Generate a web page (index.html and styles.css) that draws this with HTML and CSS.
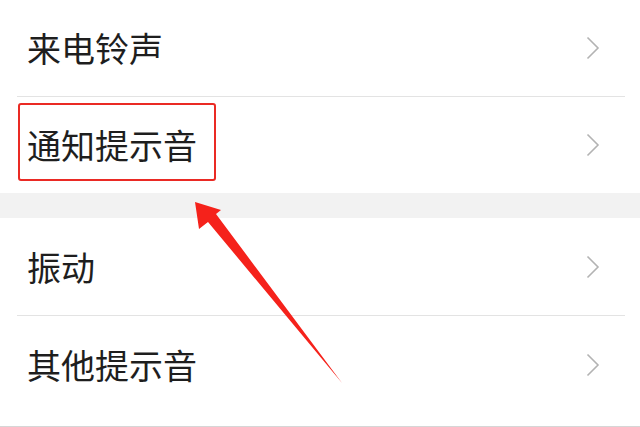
FILE: index.html
```html
<!DOCTYPE html>
<html lang="zh-CN">
<head>
<meta charset="utf-8">
<title>声音设置</title>
<link rel="stylesheet" href="styles.css">
</head>
<body>
<div class="page">
  <div class="group">
    <div class="item item-first">
      <span class="label">来电铃声</span>
      <svg class="chev" width="14" height="24" viewBox="0 0 14 24"><polyline points="1.5,1.5 12,12 1.5,22.5" fill="none" stroke="#b3b3b3" stroke-width="1.6"/></svg>
    </div>
    <div class="item item-second">
      <span class="label">通知提示音</span>
      <svg class="chev" width="14" height="24" viewBox="0 0 14 24"><polyline points="1.5,1.5 12,12 1.5,22.5" fill="none" stroke="#b3b3b3" stroke-width="1.6"/></svg>
      <div class="highlight"></div>
    </div>
  </div>
  <div class="gap"></div>
  <div class="group">
    <div class="item item-third">
      <span class="label">振动</span>
      <svg class="chev" width="14" height="24" viewBox="0 0 14 24"><polyline points="1.5,1.5 12,12 1.5,22.5" fill="none" stroke="#b3b3b3" stroke-width="1.6"/></svg>
    </div>
    <div class="item item-fourth">
      <span class="label">其他提示音</span>
      <svg class="chev" width="14" height="24" viewBox="0 0 14 24"><polyline points="1.5,1.5 12,12 1.5,22.5" fill="none" stroke="#b3b3b3" stroke-width="1.6"/></svg>
    </div>
  </div>
  <div class="footer"></div>
  <svg class="arrow" width="640" height="427" viewBox="0 0 640 427">
    <polygon points="195,202 221,210 216,214 342,383 208,222 199,229" fill="#f5221b"/>
  </svg>
</div>
</body>
</html>
```
FILE: styles.css
```css
html, body {
  margin: 0;
  padding: 0;
  background: #ffffff;
}
.page {
  position: relative;
  width: 640px;
  height: 427px;
  overflow: hidden;
  font-family: "Noto Sans CJK SC", "Noto Sans", sans-serif;
  color: #1e1e1e;
}
.group {
  display: flex;
  flex-direction: column;
}
.item {
  position: relative;
  display: flex;
  align-items: center;
  justify-content: space-between;
  padding: 0 40px 0 27px;
  box-sizing: border-box;
}
.label {
  font-size: 34px;
  line-height: 40px;
  letter-spacing: 0;
}
.chev {
  display: block;
  flex: none;
}
.item-first {
  height: 97px;
  border-bottom: 1px solid #e3e3e3;
  margin-left: 17px;
  margin-right: 15px;
  padding-left: 10px;
  padding-right: 25px;
}
.item-second {
  height: 96px;
}
.item-third {
  height: 98px;
  border-bottom: 1px solid #e3e3e3;
  margin-left: 17px;
  margin-right: 15px;
  padding-left: 10px;
  padding-right: 25px;
}
.item-fourth {
  height: 98px;
}
.gap {
  height: 25px;
  background: #f2f2f2;
}
.footer {
  height: 12px;
  border-bottom: 1px solid #d6d6d6;
}
.highlight {
  position: absolute;
  left: 18px;
  top: 6px;
  width: 198px;
  height: 78px;
  box-sizing: border-box;
  border: 2px solid #ea2a24;
  border-radius: 3px;
}
.arrow {
  position: absolute;
  left: 0;
  top: 0;
  pointer-events: none;
}
```
